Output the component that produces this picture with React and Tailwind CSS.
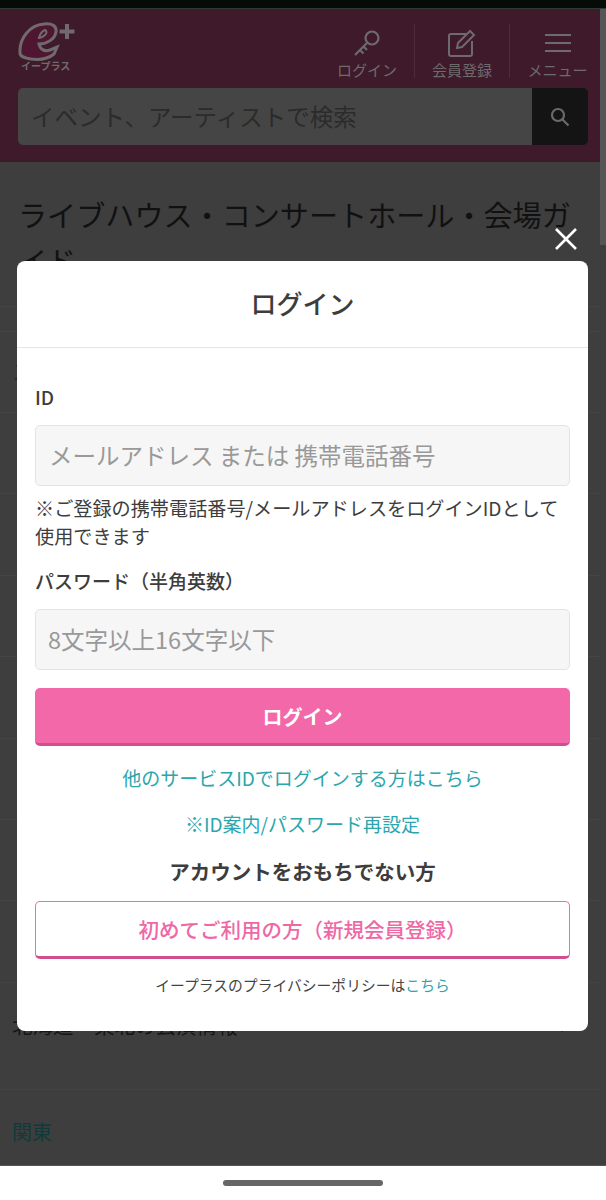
import React from "react";

const jp = { fontFamily: '"Noto Sans CJK JP", "Noto Sans", sans-serif' };

function NavItem({ label, children, divider }) {
  return (
    <div className={`flex h-[54px] w-[95px] flex-col items-center justify-between ${divider ? "border-r border-[#4f2a3b]" : ""}`}>
      <div className="flex h-[38px] items-center justify-center">{children}</div>
      <span className="text-[15px] leading-[16px] text-[#6f6a6c]">{label}</span>
    </div>
  );
}

function Row() {
  return <div className="h-[81.4px] border-b border-[#444444]" />;
}

export default function App() {
  return (
    <div style={jp} className="relative flex h-[1200px] w-[606px] flex-col overflow-hidden bg-[#3e3e3e]">
      <div className="h-[9px] shrink-0 border-b border-[#2f3a35] bg-[#050c08]" />

      <div className="flex flex-1 flex-col overflow-hidden">
        <header className="h-[153px] w-[600px] shrink-0 bg-[#3e1a2a] px-[18px] pt-[12px]">
          <div className="flex h-[58px] items-start justify-between">
            <div className="flex w-[60px] flex-col">
              <svg viewBox="0 0 60 40" className="h-[40px] w-[60px]" fill="none">
                <g transform="translate(-3 -1)">
                  <path d="M5 33C4 18 15 5 29 4c8-1 13 2 12 8-1 7-9 12-17 12 1 5 5 8 11 6l7-3-3 7c-6 5-15 6-23 5-6-1-11-2-11-6Z" fill="#4f1631" stroke="#716a6d" strokeWidth="3" />
                  <path d="M24 18c1-4 3-7 6-8 2 1 2 3 0 5-2 2-4 3-6 3Z" stroke="#716a6d" strokeWidth="2" />
                  <path d="M52 4v15M44.5 11.5h15" stroke="#716a6d" strokeWidth="4" />
                </g>
              </svg>
              <span className="ml-[3px] mt-[-1px] whitespace-nowrap text-[10px] font-bold leading-[12px] text-[#716a6d]">イープラス</span>
            </div>
            <div className="-mr-[23px] mt-[3px] flex">
              <NavItem label="ログイン" divider>
                <svg width="26" height="26" viewBox="0 0 26 26" fill="none" stroke="#6f6a6c" strokeWidth="2.2">
                  <circle cx="18" cy="8" r="6.5" />
                  <path d="M13 13 1 25M6 20l3.500 3.500M9.500 16.500l3.500 3.500" />
                </svg>
              </NavItem>
              <NavItem label="会員登録" divider>
                <svg width="28" height="28" viewBox="0 0 28 28" fill="none" stroke="#6f6a6c" strokeWidth="2">
                  <path d="M18 5H3a2 2 0 0 0-2 2v18a2 2 0 0 0 2 2h19a2 2 0 0 0 2-2V12" />
                  <path d="M10 14 22 2l4 4-12 12-5 1 1-5Z" />
                </svg>
              </NavItem>
              <NavItem label="メニュー">
                <svg width="26" height="20" viewBox="0 0 26 20" fill="none" stroke="#6f6a6c" strokeWidth="2.2">
                  <path d="M0 2h26M0 10h26M0 18h26" />
                </svg>
              </NavItem>
            </div>
          </div>
          <div className="mt-[9px] flex h-[57px] w-[570px]">
            <div className="flex flex-1 items-center rounded-l-[5px] bg-[#454545] pl-[13px] text-[23.500px] text-[#2b2b2b]">イベント、アーティストで検索</div>
            <div className="flex w-[56px] items-center justify-center rounded-r-[5px] bg-[#141414]">
              <svg width="20" height="20" viewBox="0 0 20 20" fill="none" stroke="#6a6a6a" strokeWidth="2.2">
                <circle cx="8" cy="8" r="6" />
                <path d="m12.500 12.500 6 6" />
              </svg>
            </div>
          </div>
        </header>

        <div className="h-[145px] w-[600px] shrink-0 border-b border-[#444444] pl-[18px] pr-[12px] pt-[29px] text-[29.100px] leading-[46px] text-[#111111]">
          ライブハウス・コンサートホール・会場ガイド
        </div>
        <div className="h-[25px] w-[600px] shrink-0 border-b border-[#444444]" />
        <div className="w-[600px] shrink-0">
          <div className="flex h-[81px] items-center border-b border-[#444444] pl-[12px] text-[20px] text-[#123335]">スポット</div>
          <Row />
          <Row />
          <Row />
          <Row />
          <Row />
          <Row />
          <Row />
          <div className="flex h-[107px] items-start justify-between border-b border-[#444444] pl-[12px] pr-[34px] pt-[27px] text-[20.500px] leading-[30px] text-[#151515]">
            <span>北海道・東北の公演情報</span>
            <span className="text-[#222222]">›</span>
          </div>
          <div className="pl-[12px] pt-[26px] text-[20px] leading-[32px] text-[#0f3a3c]">関東</div>
        </div>
      </div>

      <div className="flex h-[35px] shrink-0 items-center justify-center border-t border-[#555555] bg-white">
        <div className="h-[6px] w-[160px] rounded-full bg-[#666666]" />
      </div>

      <div className="absolute right-0 top-[9px] h-[236px] w-[6px] bg-[#555555]" />

      <svg className="absolute left-[554px] top-[227px]" width="24" height="24" viewBox="0 0 24 24" fill="none" stroke="#ffffff" strokeWidth="2.6">
        <path d="M2 2l20 20M22 2 2 22" />
      </svg>

      <div className="absolute left-[17px] top-[261px] flex h-[770px] w-[571px] flex-col rounded-[8px] bg-white text-[#3d3d3d]">
        <div className="flex h-[87px] shrink-0 items-center justify-center border-b border-[#e6e6e6] pb-[3px] text-[26px] font-medium">ログイン</div>
        <div className="flex flex-1 flex-col px-[18px] pt-[35px]">
          <label className="text-[19px] font-medium leading-[28px]">ID</label>
          <div className="mt-[14px] flex h-[61px] items-center rounded-[5px] border border-[#e4e4e4] bg-[#f6f6f6] pl-[13px] text-[23.500px] text-[#999999]">メールアドレス または 携帯電話番号</div>
          <p className="mt-[8px] text-[19.150px] leading-[28px]">※ご登録の携帯電話番号/メールアドレスをログインIDとして使用できます</p>
          <label className="mt-[17px] text-[19px] font-medium leading-[28px]">パスワード（半角英数）</label>
          <div className="mt-[14px] flex h-[61px] items-center rounded-[5px] border border-[#e4e4e4] bg-[#f6f6f6] pl-[12px] text-[23.500px] text-[#999999]">8文字以上16文字以下</div>
          <button className="mt-[18px] h-[58px] rounded-[5px] border-b-[3px] border-[#d14f8d] bg-[#f268a8] pt-[2px] text-[20px] font-bold text-white">ログイン</button>
          <a className="mt-[18px] text-center text-[19px] leading-[28px] text-[#2ba6ad]">他のサービスIDでログインする方はこちら</a>
          <a className="mt-[18px] text-center text-[19px] leading-[28px] text-[#2ba6ad]">※ID案内/パスワード再設定</a>
          <div className="mt-[18px] text-center text-[20.500px] font-bold leading-[30px]">アカウントをおもちでない方</div>
          <button className="mt-[15px] h-[58px] rounded-[5px] border border-b-[3px] border-[#ea6fa8] border-b-[#d14f8d] bg-white text-[20.500px] font-medium text-[#ee68a6]">初めてご利用の方（新規会員登録）</button>
          <p className="mt-[15px] text-center text-[14.800px] leading-[22px] text-[#444444]">イープラスのプライバシーポリシーは<span className="text-[#2ba6ad]">こちら</span></p>
        </div>
      </div>
    </div>
  );
}
